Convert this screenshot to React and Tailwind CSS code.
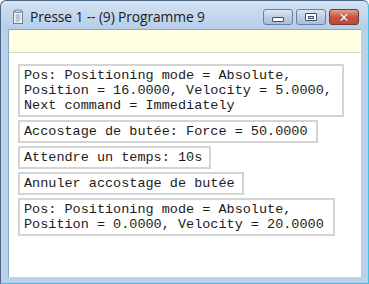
const boxes = [
  {
    w: "w-[326px]",
    lines: [
      "Pos: Positioning mode = Absolute,",
      "Position = 16.0000, Velocity = 5.0000,",
      "Next command = Immediately",
    ],
  },
  { w: "w-[300px]", lines: ["Accostage de butée: Force = 50.0000"] },
  { w: "w-[193px]", lines: ["Attendre un temps: 10s"] },
  { w: "w-[226px]", lines: ["Annuler accostage de butée"] },
  {
    w: "w-[317px]",
    lines: [
      "Pos: Positioning mode = Absolute,",
      "Position = 0.0000, Velocity = 20.0000",
    ],
  },
];

const NoteIcon = () => (
  <svg width="12" height="16" viewBox="0 0 12 16">
    <rect x="1.5" y="2.5" width="9" height="12" fill="#f4f4f4" stroke="#6b7e9c" />
    <rect x="3" y="1" width="6" height="2.5" fill="#c9d3e3" stroke="#6b7e9c" strokeWidth="0.8" />
    <path d="M3.5 6h5M3.5 8h5M3.5 10h5M3.5 12h4" stroke="#8a96aa" strokeWidth="1" />
  </svg>
);

const CaptionBtn = ({ close, children }) => (
  <div
    className={
      close
        ? "w-[30px] h-[16px] rounded-[3px] border border-[#6d3a36] bg-gradient-to-b from-[#e3a08f] via-[#c8533f] to-[#c3472f] flex items-center justify-center"
        : "w-[30px] h-[16px] rounded-[3px] border border-[#6a7f99] bg-gradient-to-b from-[#dbe6f3] via-[#bccee4] to-[#a8bfdb] flex items-center justify-center"
    }
  >
    {children}
  </div>
);

const App = () => {
  return (
    <div className="w-[369px] h-[284px] bg-white overflow-hidden">
      <div className="w-[369px] h-[284px] flex flex-col bg-[#b9d1ea] border-t border-l border-[#4c6784] border-r border-b border-r-[#3fc3dd] border-b-[#3fc3dd] rounded-tl-[6px] rounded-tr-[6px]">
        <div className="h-[28px] flex items-center pt-[4px] pl-[11px] pr-[9px] bg-gradient-to-b from-[#d3e2f3] to-[#b6cde8] rounded-t-[6px]">
          <NoteIcon />
          <span className="ml-[6px] text-[13.8px] text-[#1b1b1b] font-['Open_Sans',sans-serif] tracking-[-0.1px]">
            Presse 1 -- (9) Programme 9
          </span>
          <div className="ml-auto flex gap-[3px]">
            <CaptionBtn>
              <div className="w-[12px] h-[5px] mt-[4px] bg-white border border-[#3c4e66] rounded-[1px]" />
            </CaptionBtn>
            <CaptionBtn>
              <div className="w-[12px] h-[8px] bg-white border border-[#3c4e66] rounded-[1px] flex items-center justify-center">
                <div className="w-[6px] h-[3px] border border-[#3c4e66] bg-[#dde6f1]" />
              </div>
            </CaptionBtn>
            <CaptionBtn close>
              <span className="text-white text-[13px] font-bold leading-none font-['DejaVu_Sans',sans-serif] [text-shadow:0_0_1px_#5a1f18]">✕</span>
            </CaptionBtn>
          </div>
        </div>
        <div className="flex-1 mx-[7px] mb-[6px] flex flex-col border-l border-t border-[#8fa6c2]">
          <div className="h-[23px] bg-[#ffffe1] border-b border-[#d9d9c8]" />
          <div className="flex-1 bg-white pl-[9px] pt-[11px] flex flex-col gap-[3px] items-start font-['Liberation_Mono',monospace] text-[13.5px] leading-[15px] text-[#221a1a]">
            {boxes.map((b, i) => (
              <div key={i} className={`${b.w} border-2 border-[#d4d4d4] px-[4px] py-[2px] whitespace-pre`}>
                {b.lines.map((l, j) => (
                  <div key={j}>{l}</div>
                ))}
              </div>
            ))}
          </div>
        </div>
      </div>
    </div>
  );
};

export default App;
